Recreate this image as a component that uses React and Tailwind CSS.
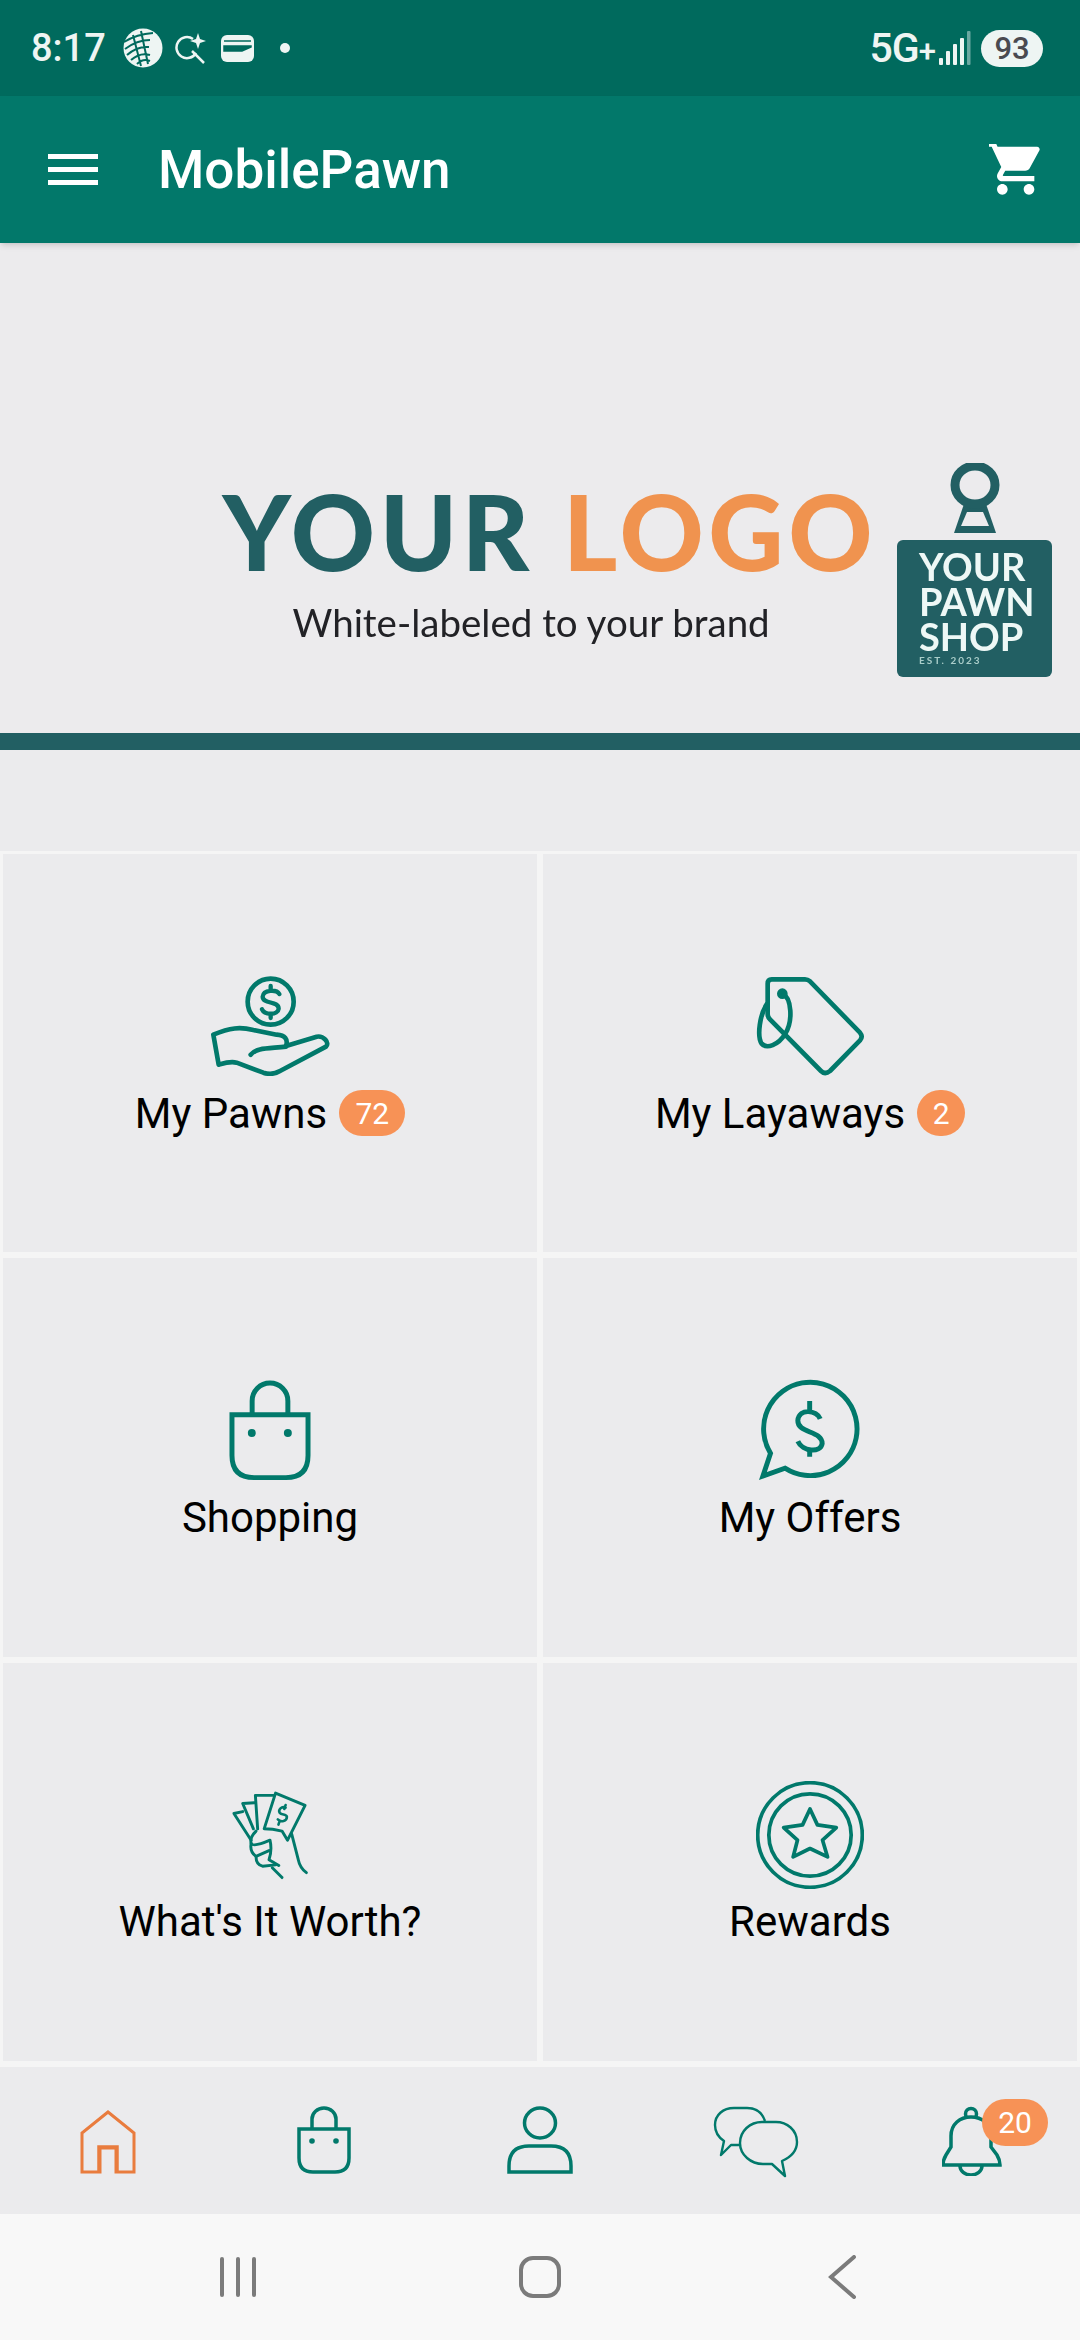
import React from "react";

const TEAL = "#01796b";

const HandCoinIcon = () => (
  <svg width="120" height="100" viewBox="270 50 360 300" fill="none" stroke={TEAL} strokeWidth="14" strokeLinejoin="round" strokeLinecap="round">
    <circle cx="452" cy="127" r="69" />
    <path strokeWidth="13" d="M478 104 C470 90 430 90 428 112 C428 135 476 124 476 148 C474 168 434 168 426 150 M452 80 V94 M452 164 V176" />
    <path d="M280 226 C330 205 360 202 400 212 L470 226 C495 228 505 240 498 260 L590 232 C610 228 630 250 618 262 L480 335 C460 347 445 345 430 340 L350 310 C330 305 310 312 296 316 Z" />
    <path d="M392 286 C410 265 440 268 498 262" />
  </svg>
);

const TagIcon = () => (
  <svg width="110" height="100" viewBox="350 55 330 300" fill="none" stroke={TEAL} strokeWidth="14" strokeLinejoin="round" strokeLinecap="round">
    <path d="M400 65 L500 65 Q508 65 515 71 L665 225 Q675 237 665 248 L575 340 Q560 352 548 340 L395 185 Q388 178 388 170 L388 78 Q388 65 400 65 Z" />
    <path d="M432 108 C460 120 465 190 440 230 C420 262 385 275 370 258 C355 235 365 170 385 140" />
    <circle cx="432" cy="108" r="9" fill={TEAL} />
  </svg>
);

const BagIcon = () => (
  <svg width="82" height="102" viewBox="86 50 248 306" fill="none" stroke={TEAL} strokeWidth="15">
    <path d="M95 157 H325 V280 Q325 347 258 347 H162 Q95 347 95 280 Z" />
    <path d="M156 157 V115 A54 54 0 0 1 264 115 V157" />
    <circle cx="155" cy="212" r="12" fill={TEAL} stroke="none" />
    <circle cx="264" cy="212" r="12" fill={TEAL} stroke="none" />
  </svg>
);

const OfferIcon = () => (
  <svg width="102" height="104" viewBox="118 28 310 312" fill="none" stroke={TEAL} strokeWidth="15">
    <path d="M153 255 A142 142 0 1 1 197 300 L130 324 Z" />
    <path d="M304 150 C295 125 240 115 236 155 C235 195 310 185 310 225 C305 255 250 250 236 218 M272 96 V125 M272 240 V265" />
  </svg>
);

const MoneyIcon = () => (
  <svg width="78" height="92" viewBox="88 86 240 276" fill="none" stroke={TEAL} strokeWidth="9" strokeLinejoin="round" strokeLinecap="round">
    <path d="M225 95 L316 133 L262 240 L245 212 Q215 205 190 205 Z" />
    <path d="M218 102 H163 L170 205" />
    <path d="M160 125 L124 127 L157 205" />
    <path d="M124 152 L97 158 L150 240" />
    <path d="M256 140 C244 134 232 146 238 156 C244 164 258 158 260 168 C260 182 242 186 232 176 M256 132 L252 144 M238 180 L234 192" strokeWidth="8" />
    <path d="M275 222 L295 300 Q300 325 320 340" />
    <path d="M165 212 Q145 232 150 250 Q158 262 208 240 Q215 270 205 300 L235 318" />
    <path d="M150 250 Q145 275 165 290 L205 272" />
    <path d="M165 290 Q165 315 185 320 L225 316" />
    <path d="M215 325 L245 355" />
  </svg>
);

const RewardsIcon = () => (
  <svg width="108" height="108" viewBox="50 65 320 320" fill="none" stroke={TEAL} strokeWidth="11" strokeLinejoin="round">
    <circle cx="210" cy="225" r="155" />
    <circle cx="210" cy="225" r="122" />
    <path d="M210 148 L232 195 L288 203 L247 240 L262 290 L210 265 L160 290 L173 240 L132 203 L188 195 Z" />
  </svg>
);

const HomeNav = () => (
  <svg width="56" height="64" viewBox="0 0 56 64" fill="none" stroke="#e97c3e" strokeWidth="3">
    <path d="M28 2 L2 23 V62 H20 V38 H36 V62 H54 V23 Z" />
    <path strokeWidth="3.5" d="M19 62 V37 H37 V62" />
  </svg>
);

const BagNav = () => (
  <svg width="54" height="68" viewBox="0 0 54 68" fill="none" stroke={TEAL} strokeWidth="3.5">
    <path d="M2 23 H52 V52 Q52 66 38 66 H16 Q2 66 2 52 Z" />
    <path d="M15 23 V13 A12 11 0 0 1 39 13 V23" />
    <circle cx="15" cy="35" r="2.8" fill={TEAL} stroke="none" />
    <circle cx="39" cy="35" r="2.8" fill={TEAL} stroke="none" />
  </svg>
);

const PersonNav = () => (
  <svg width="66" height="68" viewBox="0 0 66 68" fill="none" stroke={TEAL} strokeWidth="3.5">
    <ellipse cx="33" cy="17" rx="15.5" ry="15" />
    <path d="M2 66 V60 Q2 40 22 40 H44 Q64 40 64 60 V66 Z" />
  </svg>
);

const ChatNav = () => (
  <svg width="86" height="72" viewBox="0 0 86 72" fill="none" stroke={TEAL} strokeWidth="2.4" strokeLinejoin="round">
    <path d="M52 15 C49 6 43 2 34 2 H21 C10 2 2 9 2 19 C2 25 5 31 11 35 L8 49 L18 39 H28" />
    <path d="M27 37 C27 25 37 16 49 16 H63 C74 16 84 24 84 36 C84 45 78 51 69 55 L72 70 L59 58 H50 C38 58 27 49 27 37 Z" />
  </svg>
);

const BellNav = () => (
  <svg width="60" height="70" viewBox="0 0 60 70" fill="none" stroke={TEAL} strokeWidth="3.5">
    <circle cx="29" cy="8" r="5.5" />
    <path d="M9 41 V30 C9 18 18 11 29 11 C40 11 49 18 49 30 V41 L55 49 Q58 54 58 59 H1 Q1 54 4 49 Z" fill="#ebebed" />
    <path d="M18 60 A11 9 0 0 0 40 60" />
  </svg>
);

const tiles = [
  { label: "My Pawns", icon: <HandCoinIcon />, count: "72", badge: "w-[66px]" },
  { label: "My Layaways", icon: <TagIcon />, count: "2", badge: "w-[48px]" },
  { label: "Shopping", icon: <BagIcon /> },
  { label: "My Offers", icon: <OfferIcon /> },
  { label: "What's It Worth?", icon: <MoneyIcon /> },
  { label: "Rewards", icon: <RewardsIcon /> },
];

const StatusBar = () => (
  <div className="h-[96px] bg-[#006a5d] flex items-center justify-between pl-[31px] pr-[37px] text-[#eef5f3]">
    <div className="flex items-center">
      <span className="text-[38px] font-medium w-[92px]">8:17</span>
      {/* globe */}
      <svg width="40" height="40" viewBox="0 0 40 40" className="mr-[12px]">
        <circle cx="20" cy="20" r="19.5" fill="#eef5f3" />
        <path d="M1 14 Q14 6 30 5 M2 21 Q14 12 27 12 M4 27 Q14 18 26 19 M8 32 Q17 24 27 27 M14 36 Q20 30 27 33 M10 7 L18 38 M18 3 L25 36" fill="none" stroke="#006a5d" strokeWidth="2" />
      </svg>
      {/* search sparkle */}
      <svg width="32" height="32" viewBox="0 0 32 32" fill="none" stroke="#eef5f3" strokeWidth="2.5" className="mr-[14px]">
        <path d="M18 7 A10.5 10.5 0 1 0 21 21" />
        <path d="M17 19 L29 31" />
        <path d="M23 1 L25 7 L31 9 L25 11 L23 17 L21 11 L15 9 L21 7 Z" fill="#eef5f3" stroke="none" />
      </svg>
      {/* wallet */}
      <svg width="33" height="27" viewBox="0 0 33 27" className="mr-[26px]">
        <rect width="33" height="27" rx="6" fill="#eef5f3" />
        <path d="M3 6 H30 M3 11 H30 V12 L21 16 H3 Z" fill="#006a5d" stroke="#006a5d" strokeWidth="1.5" />
      </svg>
      <span className="w-[10px] h-[10px] rounded-full bg-[#eef5f3]" />
    </div>
    <div className="flex items-center">
      <span className="text-[41px] font-medium tracking-[-1px] leading-none">5G</span>
      <span className="text-[31px] font-medium mt-[6px] mr-[3px] leading-none">+</span>
      <svg width="32" height="34" viewBox="0 0 32 34" fill="#eef5f3" className="mr-[10px]">
        <rect x="0" y="27" width="4" height="7" rx="1" />
        <rect x="7" y="20" width="4" height="14" rx="1" />
        <rect x="14" y="13" width="4" height="21" rx="1" />
        <rect x="21" y="7" width="4" height="27" rx="1" />
        <rect x="28" y="0" width="3.5" height="34" rx="1" fillOpacity="0.45" />
      </svg>
      <span className="w-[62px] h-[37px] rounded-full bg-[#eef5f3] text-[#4a4a50] text-[31px] font-medium flex items-center justify-center leading-none">93</span>
    </div>
  </div>
);

const AppBar = () => (
  <div className="relative z-10 h-[147px] bg-[#02786a] flex items-center pl-[48px] pr-[35px] shadow-md">
    <div className="flex flex-col gap-[8px] w-[50px] mr-[60px]">
      <div className="h-[5px] bg-white" />
      <div className="h-[5px] bg-white" />
      <div className="h-[5px] bg-white" />
    </div>
    <span className="text-white text-[53px] font-medium flex-1 mt-[2px]">MobilePawn</span>
    <svg width="56" height="56" viewBox="2 3 21 21" fill="white" className="mt-[4px]">
      <path d="M7 18c-1.1 0-1.99.9-1.99 2S5.900 22 7 22s2-.9 2-2-.9-2-2-2zM1 2v2h2l3.600 7.590-1.350 2.450c-.160.280-.250.610-.250.960 0 1.100.9 2 2 2h12v-2H7.420c-.140 0-.250-.110-.250-.250l.030-.120.900-1.630h7.450c.750 0 1.410-.410 1.750-1.030l3.580-6.490c.080-.140.120-.310.120-.480 0-.550-.450-1-1-1H5.210l-.940-2H1zm16 16c-1.100 0-1.990.9-1.990 2s.890 2 1.990 2 2-.9 2-2-.9-2-2-2z" />
    </svg>
  </div>
);

const Banner = () => (
  <div className="h-[490px] bg-[#ecebed] flex justify-end items-start pr-[28px] pt-[220px]">
    <div className="flex flex-col mr-[20px] pt-[12px] blur-[0.5px]">
      <div className="font-['Lato',sans-serif] font-black text-[104px] leading-[112px] tracking-[4.5px] whitespace-nowrap">
        <span className="text-[#225f63]">YOUR</span> <span className="text-[#f0934f]">LOGO</span>
      </div>
      <div className="font-['Lato',sans-serif] text-[38.5px] leading-[46px] text-[#222226] mt-[12px] ml-[70px]">White-labeled to your brand</div>
    </div>
    <div className="flex flex-col items-center w-[155px] blur-[0.4px]">
      <svg width="56" height="76" viewBox="0 0 56 76" className="mb-[1px]">
        <path d="M18 38 L7 70 H49 L38 38 Z" fill="#225f63" />
        <path d="M20 49 H36 L42 63 H14 Z" fill="#ecebed" />
        <ellipse cx="28" cy="22" rx="20" ry="19" fill="#ecebed" stroke="#225f63" strokeWidth="9" />
      </svg>
      <div className="w-[155px] h-[137px] rounded-[6px] bg-[#225f63] flex flex-col pl-[22px] pt-[9px] text-[#eef8f6] font-['Lato',sans-serif] font-bold text-[38px] leading-[35px]">
        <span>YOUR</span>
        <span>PAWN</span>
        <span>SHOP</span>
        <span className="text-[10px] leading-[12px] tracking-[2px] text-[#a9cdc9]">EST. 2023</span>
      </div>
    </div>
  </div>
);

const Tile = ({ label, icon, count, badge }) => (
  <div className="bg-[#ebebed] flex flex-col items-center pt-[120px]">
    <div className="h-[104px] flex items-center justify-center">{icon}</div>
    <div className="h-[56px] mt-[7px] flex items-center gap-[12px]">
      <span className="text-[42px] text-black">{label}</span>
      {count && (
        <span className={`${badge} h-[46px] rounded-full bg-[#f79256] text-white text-[30px] flex items-center justify-center`}>{count}</span>
      )}
    </div>
  </div>
);

export default function App() {
  return (
    <div className="w-[1080px] h-[2340px] flex flex-col bg-[#ebebed] overflow-hidden font-['Roboto',sans-serif]">
      <StatusBar />
      <AppBar />
      <Banner />
      <div className="h-[17px] bg-[#225f63]" />
      <div className="h-[101px]" />

      {/* Tiles */}
      <div className="h-[1216px] bg-[#f5f5f5] grid grid-cols-2 grid-rows-3 gap-[6px] pt-[3px] pb-[6px] px-[3px]">
        {tiles.map((tile) => (
          <Tile key={tile.label} {...tile} />
        ))}
      </div>

      {/* Bottom tabs */}
      <div className="h-[147px] grid grid-cols-5 pt-[39px]">
        <div className="flex justify-center items-start pt-[4px]"><HomeNav /></div>
        <div className="flex justify-center items-start"><BagNav /></div>
        <div className="flex justify-center items-start"><PersonNav /></div>
        <div className="flex justify-center items-start"><ChatNav /></div>
        <div className="flex justify-center items-start">
          <div className="relative w-[60px]">
            <BellNav />
            <span className="absolute left-[40px] top-[-7px] w-[66px] h-[47px] rounded-full bg-[#f79256] text-white text-[30px] flex items-center justify-center">20</span>
          </div>
        </div>
      </div>

      {/* System nav */}
      <div className="flex-1 bg-[#f8f8f8] grid grid-cols-3 px-[87px] items-center">
        <div className="flex justify-center gap-[12px]">
          <div className="w-[4px] h-[40px] rounded-full bg-[#7b7b7b]" />
          <div className="w-[4px] h-[40px] rounded-full bg-[#7b7b7b]" />
          <div className="w-[4px] h-[40px] rounded-full bg-[#7b7b7b]" />
        </div>
        <div className="flex justify-center">
          <div className="w-[42px] h-[42px] rounded-[14px] border-[4px] border-[#7b7b7b]" />
        </div>
        <div className="flex justify-center">
          <svg width="28" height="44" viewBox="0 0 28 44" fill="none" stroke="#7b7b7b" strokeWidth="4" strokeLinecap="round">
            <path d="M26 2 L3 22 L26 42" />
          </svg>
        </div>
      </div>
    </div>
  );
}
